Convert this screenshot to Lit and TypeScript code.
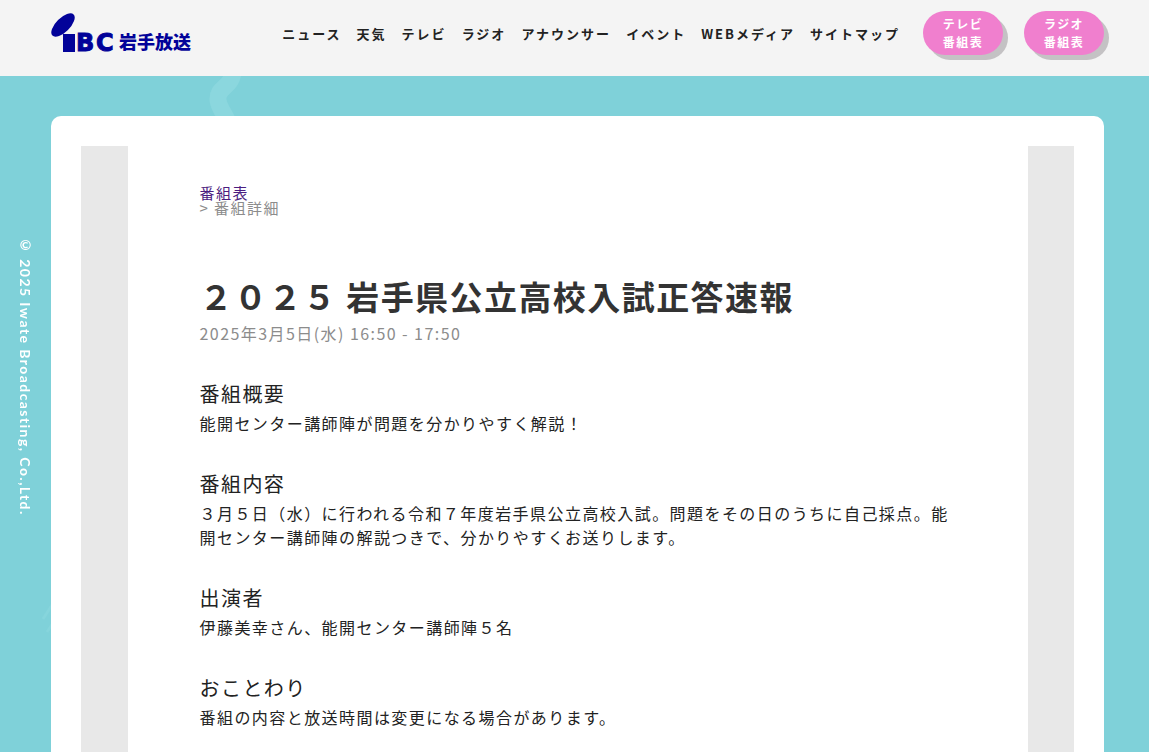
import { LitElement, html, css } from "lit";
import { customElement } from "lit/decorators.js";

interface Section {
  title: string;
  body: string;
}

const NAV = [
  "ニュース",
  "天気",
  "テレビ",
  "ラジオ",
  "アナウンサー",
  "イベント",
  "WEBメディア",
  "サイトマップ",
];

const SECTIONS: Section[] = [
  { title: "番組概要", body: "能開センター講師陣が問題を分かりやすく解説！" },
  {
    title: "番組内容",
    body: "３月５日（水）に行われる令和７年度岩手県公立高校入試。問題をその日のうちに自己採点。能開センター講師陣の解説つきで、分かりやすくお送りします。",
  },
  { title: "出演者", body: "伊藤美幸さん、能開センター講師陣５名" },
  { title: "おことわり", body: "番組の内容と放送時間は変更になる場合があります。" },
];

@customElement("site-header")
class SiteHeader extends LitElement {
  static styles = css`
    :host {
      display: block;
      background: #f4f4f4;
    }
    .bar {
      display: flex;
      align-items: flex-start;
      height: 76px;
      padding: 0 45px 0 51px;
      box-sizing: border-box;
    }
    .logo {
      display: block;
      margin-top: 12px;
      margin-right: auto;
    }
    .logo svg {
      display: block;
    }
    .mark {
      fill: #020299;
    }
    .latin {
      fill: #020299;
      stroke: #020299;
      stroke-width: 1px;
      font: 700 24px "DejaVu Sans", sans-serif;
      letter-spacing: 0;
    }
    .kanji {
      fill: #020299;
      font: 900 18px "Noto Sans CJK JP", sans-serif;
      letter-spacing: 0;
    }
    .menu {
      display: flex;
      gap: 15px;
      margin: 24px 23px 0 0;
      padding: 0;
      list-style: none;
    }
    .menu a {
      display: block;
      color: #222;
      font-size: 13px;
      font-weight: 700;
      letter-spacing: 2px;
      line-height: 20px;
      text-decoration: none;
      white-space: nowrap;
    }
    .guides {
      display: flex;
      gap: 21px;
      margin-top: 11px;
    }
    .guide {
      width: 80px;
      padding: 4px 0;
      border-radius: 22px;
      background: #f07fce;
      box-shadow: 5px 5px 0 #c4c2c4;
      color: #fff;
      font-size: 12px;
      font-weight: 700;
      line-height: 18px;
      text-align: center;
      text-decoration: none;
    }
  `;

  render() {
    return html`
      <header class="bar">
        <a class="logo" href="#" aria-label="IBC岩手放送">
          <svg width="142" height="52" viewBox="0 0 142 52">
            <ellipse class="mark" cx="12" cy="13" rx="15" ry="7" transform="rotate(-45 12 13)" />
            <rect class="mark" x="12" y="22" width="12" height="18" />
            <text class="latin" x="25 45" y="39">BC</text>
            <text class="kanji" x="68" y="37">岩手放送</text>
          </svg>
        </a>
        <nav>
          <ul class="menu">
            ${NAV.map((label) => html`<li><a href="#">${label}</a></li>`)}
          </ul>
        </nav>
        <div class="guides">
          <a class="guide" href="#">テレビ<br />番組表</a>
          <a class="guide" href="#">ラジオ<br />番組表</a>
        </div>
      </header>
    `;
  }
}

@customElement("program-detail")
class ProgramDetail extends LitElement {
  static styles = css`
    :host {
      display: block;
      box-sizing: border-box;
      width: 100%;
      max-width: 900px;
      padding: 39px 70px 20px 72px;
      background: #fff;
      color: #222;
    }
    .crumbs {
      color: #8c8c8c;
      font-size: 15px;
      line-height: 15px;
    }
    .crumbs a {
      color: #4b1c80;
      text-decoration: none;
    }
    .crumb {
      display: block;
    }
    .title {
      margin: 56px 0 0;
      color: #333;
      font-size: 33px;
      font-weight: 700;
      line-height: 50px;
    }
    .date {
      margin: 0;
      color: #8c8c8c;
      line-height: 24px;
    }
    .section {
      margin-top: 31px;
    }
    .heading {
      margin: 0;
      font-size: 20px;
      font-weight: 400;
      line-height: 35px;
    }
    .text {
      margin: 0;
      line-height: 24px;
    }
  `;

  render() {
    return html`
      <nav class="crumbs">
        <a class="crumb" href="#">番組表</a>
        <span class="crumb">&gt; 番組詳細</span>
      </nav>
      <h1 class="title">２０２５ 岩手県公立高校入試正答速報</h1>
      <p class="date">2025年3月5日(水) 16:50 - 17:50</p>
      ${SECTIONS.map(
        (s) => html`
          <section class="section">
            <h2 class="heading">${s.title}</h2>
            <p class="text">${s.body}</p>
          </section>
        `
      )}
    `;
  }
}

@customElement("app-root")
class AppRoot extends LitElement {
  static styles = css`
    :host {
      display: flex;
      flex-direction: column;
      min-height: 100vh;
      font-family: "Noto Sans CJK JP", sans-serif;
      font-size: 16px;
      letter-spacing: 0.09em;
    }
    .page {
      position: relative;
      display: grid;
      grid-template-columns: 51px minmax(0, 1fr) 45px;
      flex: 1;
      padding-top: 40px;
      background: #7fd1d9;
    }
    .waves {
      position: absolute;
      top: 0;
      left: 0;
      fill: none;
      stroke: #8bd7de;
    }
    .copyright {
      position: fixed;
      top: 0;
      left: 0;
      display: flex;
      align-items: center;
      justify-content: center;
      width: 51px;
      height: 100vh;
      color: #fff;
      font-family: "Lato", sans-serif;
      font-size: 14px;
      font-weight: 700;
      writing-mode: vertical-rl;
    }
    .card {
      position: relative;
      grid-column: 2;
      display: flex;
      padding: 30px 30px 0;
      border-radius: 10px 10px 0 0;
      background: #fff;
    }
    .stage {
      display: flex;
      flex: 1;
      justify-content: center;
      background: #e8e8e8;
    }
  `;

  render() {
    return html`
      <site-header></site-header>
      <main class="page">
        <svg class="waves" width="260" height="600" viewBox="0 0 260 600" aria-hidden="true">
          <path stroke-width="17" d="M233 -6C233 12 217 10 218 24C219 32 224 37 228 46" />
          <path stroke-width="3" opacity="0.6" d="M43 543L52 529M47 556L53 547" />
        </svg>
        <small class="copyright"><span>© 2025 Iwate Broadcasting, Co.,Ltd.</span></small>
        <div class="card">
          <div class="stage"><program-detail></program-detail></div>
        </div>
      </main>
    `;
  }
}
